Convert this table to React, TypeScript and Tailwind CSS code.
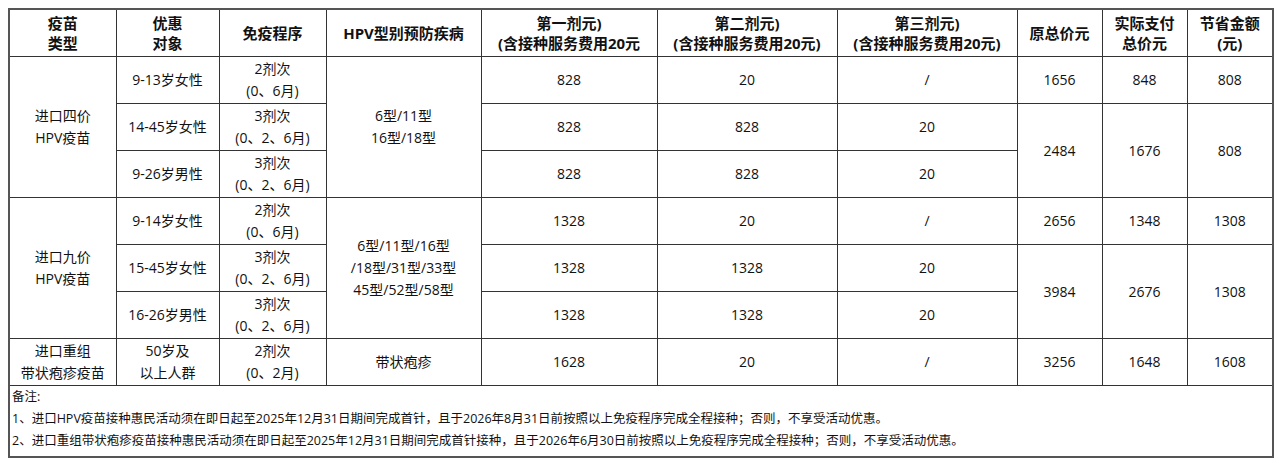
import React from "react";

type Row = {
  target: string;
  schedule: [string, string];
  d1: string;
  d2: string;
  d3: string;
};

const groups: {
  type: [string, string];
  disease: string[];
  rows: Row[];
  totals: { span: number; orig: string; paid: string; saved: string }[];
}[] = [
  {
    type: ["进口四价", "HPV疫苗"],
    disease: ["6型/11型", "16型/18型"],
    rows: [
      { target: "9-13岁女性", schedule: ["2剂次", "(0、6月)"], d1: "828", d2: "20", d3: "/" },
      { target: "14-45岁女性", schedule: ["3剂次", "(0、2、6月)"], d1: "828", d2: "828", d3: "20" },
      { target: "9-26岁男性", schedule: ["3剂次", "(0、2、6月)"], d1: "828", d2: "828", d3: "20" },
    ],
    totals: [
      { span: 1, orig: "1656", paid: "848", saved: "808" },
      { span: 2, orig: "2484", paid: "1676", saved: "808" },
    ],
  },
  {
    type: ["进口九价", "HPV疫苗"],
    disease: ["6型/11型/16型", "/18型/31型/33型", "45型/52型/58型"],
    rows: [
      { target: "9-14岁女性", schedule: ["2剂次", "(0、6月)"], d1: "1328", d2: "20", d3: "/" },
      { target: "15-45岁女性", schedule: ["3剂次", "(0、2、6月)"], d1: "1328", d2: "1328", d3: "20" },
      { target: "16-26岁男性", schedule: ["3剂次", "(0、2、6月)"], d1: "1328", d2: "1328", d3: "20" },
    ],
    totals: [
      { span: 1, orig: "2656", paid: "1348", saved: "1308" },
      { span: 2, orig: "3984", paid: "2676", saved: "1308" },
    ],
  },
];

const td = "border border-[#333] text-center align-middle p-0";

function Lines({ lines, gap = "leading-[22px]" }: { lines: string[]; gap?: string }) {
  return (
    <div className={gap}>
      {lines.map((l) => (
        <div key={l}>{l}</div>
      ))}
    </div>
  );
}

export default function App() {
  return (
    <div className="bg-white w-[1280px] h-[463px] pt-2 pl-2 text-[14px] text-[#111]" style={{ fontFamily: '"Open Sans", "Noto Sans CJK SC", sans-serif' }}>
      <table className="table-fixed border-collapse w-[1264px] border-2 border-[#555]">
        <colgroup>
          <col className="w-[107px]" />
          <col className="w-[103px]" />
          <col className="w-[107px]" />
          <col className="w-[155px]" />
          <col className="w-[176px]" />
          <col className="w-[180px]" />
          <col className="w-[180px]" />
          <col className="w-[85px]" />
          <col className="w-[85px]" />
          <col className="w-[86px]" />
        </colgroup>
        <thead>
          <tr className="h-[47px] font-bold text-[15px]">
            <th className={td}><Lines lines={["疫苗", "类型"]} gap="leading-[20px]" /></th>
            <th className={td}><Lines lines={["优惠", "对象"]} gap="leading-[20px]" /></th>
            <th className={td}>免疫程序</th>
            <th className={td}>HPV型别预防疾病</th>
            <th className={td}><Lines lines={["第一剂元)", "(含接种服务费用20元"]} gap="leading-[20px]" /></th>
            <th className={td}><Lines lines={["第二剂元)", "(含接种服务费用20元)"]} gap="leading-[20px]" /></th>
            <th className={td}><Lines lines={["第三剂元)", "(含接种服务费用20元)"]} gap="leading-[20px]" /></th>
            <th className={td}>原总价元</th>
            <th className={td}><Lines lines={["实际支付", "总价元"]} gap="leading-[20px]" /></th>
            <th className={td}><Lines lines={["节省金额", "(元)"]} gap="leading-[20px]" /></th>
          </tr>
        </thead>
        <tbody>
          {groups.map((g) =>
            g.rows.map((r, i) => {
              const total = i === 0 ? g.totals[0] : i === 1 ? g.totals[1] : null;
              return (
                <tr key={g.type[0] + r.target} className="h-[47px]">
                  {i === 0 && (
                    <td rowSpan={3} className={td}>
                      <Lines lines={g.type} />
                    </td>
                  )}
                  <td className={td}>{r.target}</td>
                  <td className={td}>
                    <Lines lines={r.schedule} />
                  </td>
                  {i === 0 && (
                    <td rowSpan={3} className={td}>
                      <Lines lines={g.disease} />
                    </td>
                  )}
                  <td className={td}>{r.d1}</td>
                  <td className={td}>{r.d2}</td>
                  <td className={td}>{r.d3}</td>
                  {total && (
                    <>
                      <td rowSpan={total.span} className={td}>{total.orig}</td>
                      <td rowSpan={total.span} className={td}>{total.paid}</td>
                      <td rowSpan={total.span} className={td}>{total.saved}</td>
                    </>
                  )}
                </tr>
              );
            })
          )}
          <tr className="h-[47px]">
            <td className={td}><Lines lines={["进口重组", "带状疱疹疫苗"]} /></td>
            <td className={td}><Lines lines={["50岁及", "以上人群"]} /></td>
            <td className={td}><Lines lines={["2剂次", "(0、2月)"]} /></td>
            <td className={td}>带状疱疹</td>
            <td className={td}>1628</td>
            <td className={td}>20</td>
            <td className={td}>/</td>
            <td className={td}>3256</td>
            <td className={td}>1648</td>
            <td className={td}>1608</td>
          </tr>
          <tr className="h-[72px]">
            <td colSpan={10} className="border border-[#333] text-left align-top pl-[2px] text-[12.5px] leading-[22px]">
              <div>备注:</div>
              <div>1、进口HPV疫苗接种惠民活动须在即日起至2025年12月31日期间完成首针，且于2026年8月31日前按照以上免疫程序完成全程接种；否则，不享受活动优惠。</div>
              <div>2、进口重组带状疱疹疫苗接种惠民活动须在即日起至2025年12月31日期间完成首针接种，且于2026年6月30日前按照以上免疫程序完成全程接种；否则，不享受活动优惠。</div>
            </td>
          </tr>
        </tbody>
      </table>
    </div>
  );
}
